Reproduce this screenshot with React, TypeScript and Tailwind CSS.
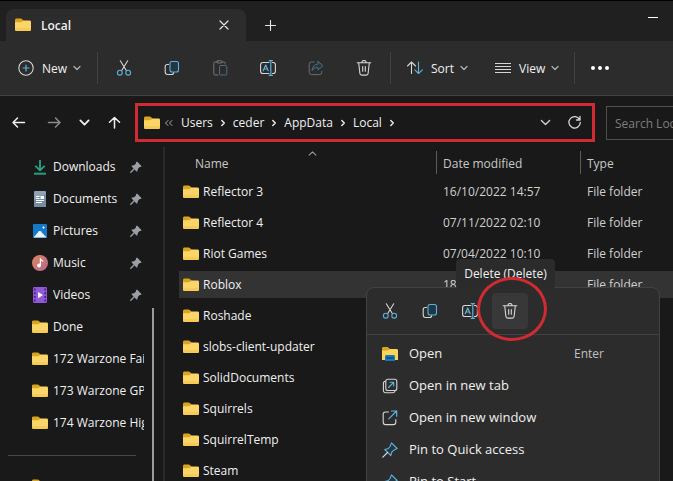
import type { ReactNode } from "react";

const BLUE = "#5db2dc";
const LIGHT = "#d6d6d6";

function Svg({ size, box = size, children }: { size: number; box?: number; children: ReactNode }) {
  return (
    <svg
      width={size}
      height={size}
      viewBox={`0 0 ${box} ${box}`}
      fill="none"
      strokeLinecap="round"
      strokeLinejoin="round"
      className="shrink-0"
      aria-hidden="true"
    >
      {children}
    </svg>
  );
}

function FolderIcon() {
  return (
    <Svg size={16}>
      <path d="M0 3.2C0 2.2.6 1.6 1.5 1.6h4.2c.5 0 .9.2 1.2.5L8.400 3.500V7H0z" fill="#d9a520" />
      <path d="M0 5.200h6c.4 0 .8-.2 1.100-.5l.9-.9c.3-.2.600-.3 1-.3h5.600c.8 0 1.400.6 1.400 1.400v7.700c0 .8-.6 1.400-1.400 1.400H1.400C.6 14 0 13.400 0 12.600z" fill="#fbd567" />
      <path d="M0 11v1.600C0 13.400.6 14 1.400 14h13.200c.8 0 1.400-.6 1.400-1.400V11z" fill="#f6cb55" />
    </Svg>
  );
}

function OpenFolderIcon() {
  return (
    <Svg size={16}>
      <path d="M0 2.500C0 1.600.6 1 1.500 1h4.200l2.300 2V7H0z" fill="#d9a520" />
      <path d="M0 4.500h6L8 3h6.600c.8 0 1.400.6 1.400 1.400V14H0z" fill="#fbd35a" />
      <path d="M3 15v-4.500C3 9.600 3.600 9 4.500 9h7c.9 0 1.500.6 1.500 1.500V15z" fill="#1478bd" />
      <path d="M5 12h6" stroke="#0b4a82" strokeWidth="1.500" />
    </Svg>
  );
}

function CutIcon() {
  return (
    <Svg size={16}>
      <path d="M4.300 0.800L10.300 10.500M11.700 0.800L5.700 10.500" stroke={LIGHT} strokeWidth="1.100" />
      <circle cx="3.800" cy="12.700" r="2.400" stroke={BLUE} strokeWidth="1.100" />
      <circle cx="12.200" cy="12.700" r="2.400" stroke={BLUE} strokeWidth="1.100" />
    </Svg>
  );
}

function CopyIcon() {
  return (
    <Svg size={16}>
      <path d="M4.500 4.500H3.200A2 2 0 0 0 1.200 6.500V12a2.500 2.500 0 0 0 2.500 2.500h4A2 2 0 0 0 9.700 12.500" stroke={LIGHT} strokeWidth="1.100" />
      <rect x="6" y="1.500" width="8.500" height="10.500" rx="2" stroke={BLUE} strokeWidth="1.100" fill="#203744" />
    </Svg>
  );
}

function PasteIcon() {
  return (
    <Svg size={16}>
      <path d="M5 2H3a1.200 1.200 0 0 0-1.200 1.200v10.600A1.200 1.200 0 0 0 3 15h3M10 2h2a1.200 1.200 0 0 1 1.200 1.200V4" stroke="#767676" />
      <rect x="4.800" y=".8" width="5.400" height="2.200" rx="1.100" stroke="#767676" />
      <rect x="7.500" y="5.500" width="7.300" height="9.500" rx="1.200" stroke="#4a6f84" />
    </Svg>
  );
}

function RenameIcon() {
  return (
    <Svg size={16}>
      <path d="M9 2.500H2.800A2.300 2.300 0 0 0 .6 4.800v6.400a2.300 2.300 0 0 0 2.200 2.300H9M12.500 2.500h.7a2.300 2.300 0 0 1 2.200 2.300v6.400a2.300 2.300 0 0 1-2.200 2.300h-.7" stroke={LIGHT} strokeWidth="1.100" />
      <path d="M3.200 10.700L5.700 5l2.500 5.700M4 9h3.400M10.800.8v14.400M9.200.6h3.200M9.200 15.400h3.200" stroke={BLUE} strokeWidth="1.200" />
    </Svg>
  );
}

function ShareIcon() {
  return (
    <Svg size={16}>
      <path d="M6 2H3.500A2.300 2.300 0 0 0 1.200 4.300v8a2.300 2.300 0 0 0 2.300 2.300h8a2.300 2.300 0 0 0 2.300-2.300V11.500" stroke="#6d6d6d" />
      <path d="M10 1.300L15 5.700l-5 4.300V7.600C7.300 7.500 5.500 8.500 4 10.600 4.300 6.700 6.500 4.200 10 3.900z" stroke="#4a6f84" fill="#2b363c" />
    </Svg>
  );
}

function TrashIcon() {
  return (
    <Svg size={16}>
      <path d="M1.200 2.800h13.600M2.700 2.800l1.200 10.700a1.800 1.800 0 0 0 1.800 1.600h4.600a1.800 1.800 0 0 0 1.800-1.600L13.300 2.800M5.900 2.600a2.100 2.100 0 0 1 4.200 0M6.700 6.500v4.700M9.300 6.500v4.700" stroke={LIGHT} strokeWidth="1.100" />
    </Svg>
  );
}

function PlusCircleIcon() {
  return (
    <Svg size={16}>
      <circle cx="8" cy="8" r="7.200" stroke={LIGHT} strokeWidth="1.100" />
      <path d="M8 5v6M5 8h6" stroke={BLUE} strokeWidth="1.200" />
    </Svg>
  );
}

function SortIcon() {
  return (
    <Svg size={16}>
      <path d="M4.500 13.500V2M.5 6l4-4 4 4" stroke={LIGHT} strokeWidth="1.100" />
      <path d="M11.500 2v11.500M7.800 9.800l3.700 3.700 3.900-3.700" stroke={BLUE} strokeWidth="1.100" />
    </Svg>
  );
}

function ViewIcon() {
  return (
    <Svg size={16}>
      <path d="M0 3.500h16M0 6.500h16M0 9.500h16M0 12.500h16" stroke={LIGHT} />
    </Svg>
  );
}

function Chevron({ size = 8, dir = "down", color = "#b4b4b4", weight = 1.2 }: { size?: number; dir?: "down" | "up" | "right"; color?: string; weight?: number }) {
  const d = { down: "M1 2.500l3 3 3-3", up: "M1 5.500l3-3 3 3", right: "M2.800 1.500L5.300 4 2.800 6.500" }[dir];
  return (
    <Svg size={size} box={8}>
      <path d={d} stroke={color} strokeWidth={weight} />
    </Svg>
  );
}

function ArrowIcon({ dir, color = "#f0f0f0" }: { dir: "left" | "right" | "up"; color?: string }) {
  const d = {
    left: "M13.500 7.500H2M6.500 3L2 7.500 6.500 12",
    right: "M1.500 7.500H13M8.500 3L13 7.500 8.500 12",
    up: "M7.500 13V2.500M2.500 7.200l5-4.700 5 4.700",
  }[dir];
  return (
    <Svg size={15}>
      <path d={d} stroke={color} strokeWidth="1.500" />
    </Svg>
  );
}

function PinnedIcon() {
  return (
    <Svg size={12}>
      <path d="M7.300.8l3.900 3.900c.4.400.2 1-.3 1.100L9.300 6.300 7.800 8l-.4 2.200c-.1.400-.6.500-.9.200L1.700 5.500c-.3-.3-.2-.8.2-.9L4.200 4.200 5.700 2.700 6.200 1.100c.2-.5.800-.6 1.100-.3z" fill="#9aa0a5" />
      <path d="M4 8L.8 11.200" stroke="#9aa0a5" strokeWidth="1.300" />
    </Svg>
  );
}

function DownloadsIcon() {
  return (
    <Svg size={16}>
      <path d="M8 1v10M3.300 6.800L8 11.300l4.700-4.500" stroke="#25a584" strokeWidth="1.800" strokeLinecap="butt" />
      <path d="M2 14.700h12" stroke="#2b9c80" strokeWidth="2" strokeLinecap="butt" />
    </Svg>
  );
}

function DocumentsIcon() {
  return (
    <Svg size={16}>
      <rect x="2" y="0" width="12" height="16" rx="1" fill="#8fa1b4" />
      <path d="M2 9l12-6v12a1 1 0 0 1-1 1H3a1 1 0 0 1-1-1z" fill="#778ba1" />
      <path d="M4 5.500h3.500M4 7.500h3.500M4 9.500h8M4 11.500h6" stroke="#fff" strokeLinecap="butt" />
      <rect x="8.500" y="5" width="3.500" height="3" fill="#fff" />
    </Svg>
  );
}

function PicturesIcon() {
  return (
    <Svg size={16}>
      <rect x="1" y="1" width="14" height="14" rx="1" fill="#1479c9" />
      <path d="M1.500 14.500L7 8.300c.5-.5 1.200-.5 1.700 0l5.800 6.200z" fill="#e8f4fc" />
      <path d="M11.500 2.800l.5 1.200 1.200.5-1.200.5-.5 1.200-.5-1.200-1.200-.5 1.200-.5z" fill="#fff" />
    </Svg>
  );
}

function MusicIcon() {
  return (
    <Svg size={16}>
      <defs>
        <linearGradient id="music" x1="0" y1="0" x2="1" y2="1">
          <stop offset="0" stopColor="#e2865c" />
          <stop offset="1" stopColor="#b56590" />
        </linearGradient>
      </defs>
      <circle cx="8" cy="8" r="8" fill="url(#music)" />
      <circle cx="7" cy="10.500" r="1.900" fill="#fff" />
      <path d="M8.400 10.500V3.500c.3 1.700 1 2 2.400 2.600" stroke="#fff" strokeWidth="1.200" />
    </Svg>
  );
}

function VideosIcon() {
  return (
    <Svg size={16}>
      <rect x="1" y="0" width="14" height="16" rx="1.200" fill="#9258d8" />
      <path d="M2.800 1.500v13M13.200 1.500v13" stroke="#4a2389" strokeWidth="1.700" strokeDasharray="2 1.700" strokeLinecap="butt" />
      <path d="M6 5v6.200l5-3.100z" fill="#fff" />
    </Svg>
  );
}

function NewTabIcon() {
  return (
    <Svg size={16}>
      <path d="M3.500 3.200A2.200 2.200 0 0 0 1.400 5.400v7.200a2.200 2.200 0 0 0 2.200 2.200h7.200a2.200 2.200 0 0 0 2.100-1.600" stroke={LIGHT} strokeWidth="1.100" />
      <rect x="3.800" y="1.200" width="11" height="11.300" rx="2" stroke={LIGHT} strokeWidth="1.100" />
      <path d="M6.500 9.500l5-5M8 4.300h3.700V8" stroke={BLUE} strokeWidth="1.100" />
    </Svg>
  );
}

function NewWindowIcon() {
  return (
    <Svg size={16}>
      <path d="M6.500 2H3.500A2.300 2.300 0 0 0 1.200 4.300v8a2.300 2.300 0 0 0 2.300 2.300h8a2.300 2.300 0 0 0 2.300-2.300V9.500" stroke={LIGHT} strokeWidth="1.100" />
      <path d="M6.800 8.800L14.600 1M9.500 1h5.200v5.200" stroke={BLUE} strokeWidth="1.200" />
    </Svg>
  );
}

function PinIcon() {
  return (
    <Svg size={16}>
      <path d="M9.500.9l5.600 5.600-3.300 1.700-2 2-1 3.500L2.800 7.500l3.500-1L8 4.500z" stroke={BLUE} strokeWidth="1.100" fill="#263740" />
      <path d="M5.500 10.500L.8 15.200" stroke={LIGHT} strokeWidth="1.200" />
    </Svg>
  );
}

function IconButton({ label, children }: { label: string; children: ReactNode }) {
  return (
    <button type="button" aria-label={label} className="flex size-8 items-center justify-center rounded">
      {children}
    </button>
  );
}

function Separator() {
  return <div className="h-8 w-px shrink-0 bg-[#414141]" />;
}

const quickLinks = [
  { name: "Downloads", icon: <DownloadsIcon />, pinned: true },
  { name: "Documents", icon: <DocumentsIcon />, pinned: true },
  { name: "Pictures", icon: <PicturesIcon />, pinned: true },
  { name: "Music", icon: <MusicIcon />, pinned: true },
  { name: "Videos", icon: <VideosIcon />, pinned: true },
  { name: "Done", icon: <FolderIcon />, pinned: false },
  { name: "172 Warzone Failed", icon: <FolderIcon />, pinned: false },
  { name: "173 Warzone GPU", icon: <FolderIcon />, pinned: false },
  { name: "174 Warzone High", icon: <FolderIcon />, pinned: false },
];

const folders = [
  { name: "Reflector 3", date: "16/10/2022 14:57" },
  { name: "Reflector 4", date: "07/11/2022 02:10" },
  { name: "Riot Games", date: "07/04/2022 10:10" },
  { name: "Roblox", date: "18", selected: true },
  { name: "Roshade" },
  { name: "slobs-client-updater" },
  { name: "SolidDocuments" },
  { name: "Squirrels" },
  { name: "SquirrelTemp" },
  { name: "Steam" },
];

const menuItems = [
  { name: "Open", icon: <OpenFolderIcon />, shortcut: "Enter" },
  { name: "Open in new tab", icon: <NewTabIcon /> },
  { name: "Open in new window", icon: <NewWindowIcon /> },
  { name: "Pin to Quick access", icon: <PinIcon /> },
  { name: "Pin to Start", icon: <PinIcon /> },
];

function TitleBar() {
  return (
    <header className="flex h-[41px] items-end border-t border-black bg-[#202020] pl-1.5">
      <div className="flex h-8 w-60 items-center rounded-t-lg bg-[#2c2c2c] pr-3 pl-[9px]">
        <FolderIcon />
        <h1 className="ml-2.5 flex-1 pt-0.5 font-semibold">Local</h1>
        <button type="button" aria-label="Close tab" className="flex size-5 items-center justify-center">
          <Svg size={10}>
            <path d="M1 1l8 8M9 1L1 9" stroke="#e6e6e6" strokeWidth="1.200" />
          </Svg>
        </button>
      </div>
      <button type="button" aria-label="New tab" className="ml-2 flex size-8 items-center justify-center">
        <Svg size={11}>
          <path d="M5.500.5v10M.5 5.500h10" stroke="#e6e6e6" strokeWidth="1.100" />
        </Svg>
      </button>
      <button type="button" aria-label="Minimise" className="mr-1 ml-auto flex h-full w-8 items-center justify-center pb-2">
        <span className="h-px w-2.5 bg-white" />
      </button>
    </header>
  );
}

function Toolbar() {
  return (
    <div className="flex h-[55px] items-center border-b border-[#414141] bg-[#2c2c2c] pl-[18px] font-medium">
      <button type="button" className="flex w-[79px] items-center">
        <PlusCircleIcon />
        <span className="mr-1.5 ml-2 pt-0.5">New</span>
        <Chevron />
      </button>
      <Separator />
      <div className="flex gap-4 px-2.5">
        <IconButton label="Cut"><CutIcon /></IconButton>
        <IconButton label="Copy"><CopyIcon /></IconButton>
        <IconButton label="Paste"><PasteIcon /></IconButton>
        <IconButton label="Rename"><RenameIcon /></IconButton>
        <IconButton label="Share"><ShareIcon /></IconButton>
        <IconButton label="Delete"><TrashIcon /></IconButton>
      </div>
      <Separator />
      <button type="button" className="ml-4 flex w-[88px] items-center">
        <SortIcon />
        <span className="mr-1.5 ml-2 pt-0.5">Sort</span>
        <Chevron />
      </button>
      <button type="button" className="flex w-[79px] items-center">
        <ViewIcon />
        <span className="mr-1.5 ml-2 pt-0.5">View</span>
        <Chevron />
      </button>
      <Separator />
      <button type="button" aria-label="See more" className="ml-4 flex h-8 items-center gap-[3px]">
        <span className="size-1 rounded-full bg-white" />
        <span className="size-1 rounded-full bg-white" />
        <span className="size-1 rounded-full bg-white" />
      </button>
    </div>
  );
}

function AddressRow() {
  return (
    <div className="flex h-[51px] items-start pt-[7px]">
      <nav aria-label="History" className="flex h-[39px] w-[135px] shrink-0 items-center pl-[11px]">
        <button type="button" aria-label="Back" className="w-9"><ArrowIcon dir="left" /></button>
        <button type="button" aria-label="Forward" className="w-8"><ArrowIcon dir="right" color="#8c8c8c" /></button>
        <button type="button" aria-label="Recent" className="w-7"><Chevron size={11} color="#f0f0f0" weight={1.3} /></button>
        <button type="button" aria-label="Up"><ArrowIcon dir="up" /></button>
      </nav>
      <nav aria-label="Path" className="flex h-[39px] min-w-[460px] flex-[460] items-center border-[3px] border-[#cf2b31] pr-2.5 pl-1.5 font-medium">
        <FolderIcon />
        <span className="ml-1 flex w-[17px]">
          <Svg size={10} box={10}>
            <path d="M4 2.500L1.500 5 4 7.500M8 2.500L5.500 5 8 7.500" stroke="#a9a9a9" />
          </Svg>
        </span>
        <ol className="flex flex-1 items-center gap-1.5">
          {["Users", "ceder", "AppData", "Local"].map((part) => (
            <li key={part} className="flex items-center gap-1.5">
              <a href="#">{part}</a>
              <Chevron dir="right" color="#f0f0f0" weight={1.4} />
            </li>
          ))}
        </ol>
        <button type="button" aria-label="Previous locations" className="mr-4"><Chevron size={11} color="#d6d6d6" weight={0.9} /></button>
        <button type="button" aria-label="Refresh">
          <Svg size={15}>
            <path d="M12.800 5A5.700 5.700 0 1 0 13.300 7.500M13 1.500V5H9.500" stroke="#d6d6d6" strokeWidth="1.300" />
          </Svg>
        </button>
      </nav>
      <input
        type="text"
        aria-label="Search Local"
        placeholder="Search Local"
        className="mt-[3px] ml-[11px] h-[34px] min-w-0 flex-[67] border border-r-0 border-[#505050] bg-transparent pl-2 placeholder:text-[#7d7d7d]"
      />
    </div>
  );
}

function Sidebar() {
  return (
    <aside className="flex w-[165px] shrink-0 border-r-2 border-[#2a2a2a]">
      <div className="w-36 shrink-0 overflow-hidden pt-1">
        <ul>
          {quickLinks.map((link) => (
            <li key={link.name}>
              <a href="#" className="flex h-8 items-center pl-8 whitespace-nowrap">
                {link.icon}
                <span className="ml-[5px] flex-1">{link.name}</span>
                {link.pinned && <span className="mr-0.5"><PinnedIcon /></span>}
              </a>
            </li>
          ))}
        </ul>
        <hr className="mt-4 mr-2 ml-2 border-[#484848]" />
        <div className="pt-[22px] pl-8"><FolderIcon /></div>
      </div>
      <div className="mt-[161px] ml-2 w-0.5 bg-[#9b9b9b]" />
    </aside>
  );
}

function FileList() {
  return (
    <main className="min-w-0 flex-1 pl-[14px]">
      <table className="w-full table-fixed border-separate border-spacing-x-0 border-spacing-y-1 text-left whitespace-nowrap">
        <colgroup>
          <col className="w-[257px]" />
          <col className="w-36" />
          <col />
        </colgroup>
        <thead>
          <tr className="h-[23px] text-[#c8c8c8]">
            <th className="relative p-0 pt-0.5 pl-4 font-normal">
              Name
              <span className="absolute -top-0.5 left-[129px]"><Chevron size={9} dir="up" color="#a0a0a0" weight={0.9} /></span>
            </th>
            <th className="border-l border-[#5c5c5c] p-0 pt-0.5 pl-1.5 font-normal">Date modified</th>
            <th className="border-l border-[#5c5c5c] p-0 pt-0.5 pl-1.5 font-normal">Type</th>
          </tr>
        </thead>
        <tbody>
          {folders.map((folder) => (
            <tr key={folder.name} className={folder.selected ? "h-[27px] bg-[#333333]" : "h-[27px]"}>
              <td className="p-0 pl-1">
                <span className="flex items-center gap-1"><FolderIcon />{folder.name}</span>
              </td>
              <td className="p-0 pl-[7px] text-[#d0d0d0]">{folder.date}</td>
              <td className="p-0 pl-[7px] text-[#d0d0d0]">{folder.date && "File folder"}</td>
            </tr>
          ))}
        </tbody>
      </table>
    </main>
  );
}

function ContextMenu() {
  return (
    <div role="menu" className="absolute top-[287px] left-[366px] w-[294px] rounded-lg border border-[#424242] bg-[#2c2c2c]">
      <div className="flex h-[47px] items-center gap-1 border-b border-[#424242] pl-[5px]">
        <button type="button" aria-label="Cut" className="flex size-9 items-center justify-center"><CutIcon /></button>
        <button type="button" aria-label="Copy" className="flex size-9 items-center justify-center"><CopyIcon /></button>
        <button type="button" aria-label="Rename" className="flex size-9 items-center justify-center"><RenameIcon /></button>
        <button type="button" aria-label="Delete" className="flex size-9 items-center justify-center rounded bg-[#383838]"><TrashIcon /></button>
      </div>
      <div className="pt-[3px] pb-1">
        {menuItems.map((item) => (
          <button key={item.name} type="button" role="menuitem" className="flex h-8 w-full items-center pl-[15px] text-left text-[13px]">
            {item.icon}
            <span className="ml-[11px] flex-1">{item.name}</span>
            {item.shortcut && <span className="mr-[55px] text-xs text-[#c0c0c0]">{item.shortcut}</span>}
          </button>
        ))}
      </div>
    </div>
  );
}

export default function App() {
  return (
    <div className="relative flex h-screen flex-col overflow-hidden bg-[#191919] font-['Open_Sans','Noto_Sans',sans-serif] text-xs text-[#f0f0f0]">
      <TitleBar />
      <Toolbar />
      <AddressRow />
      <div className="flex min-h-0 flex-1">
        <Sidebar />
        <FileList />
      </div>
      <ContextMenu />
      <div role="tooltip" className="absolute top-[259px] left-[456px] flex h-[30px] w-[99px] items-center justify-center rounded bg-[#2b2b2b] font-medium whitespace-nowrap">
        Delete (Delete)
      </div>
      <div className="absolute top-[277px] left-[477px] h-16 w-[70px] rounded-[50%] border-[3px] border-[#cf2b31]" />
    </div>
  );
}
